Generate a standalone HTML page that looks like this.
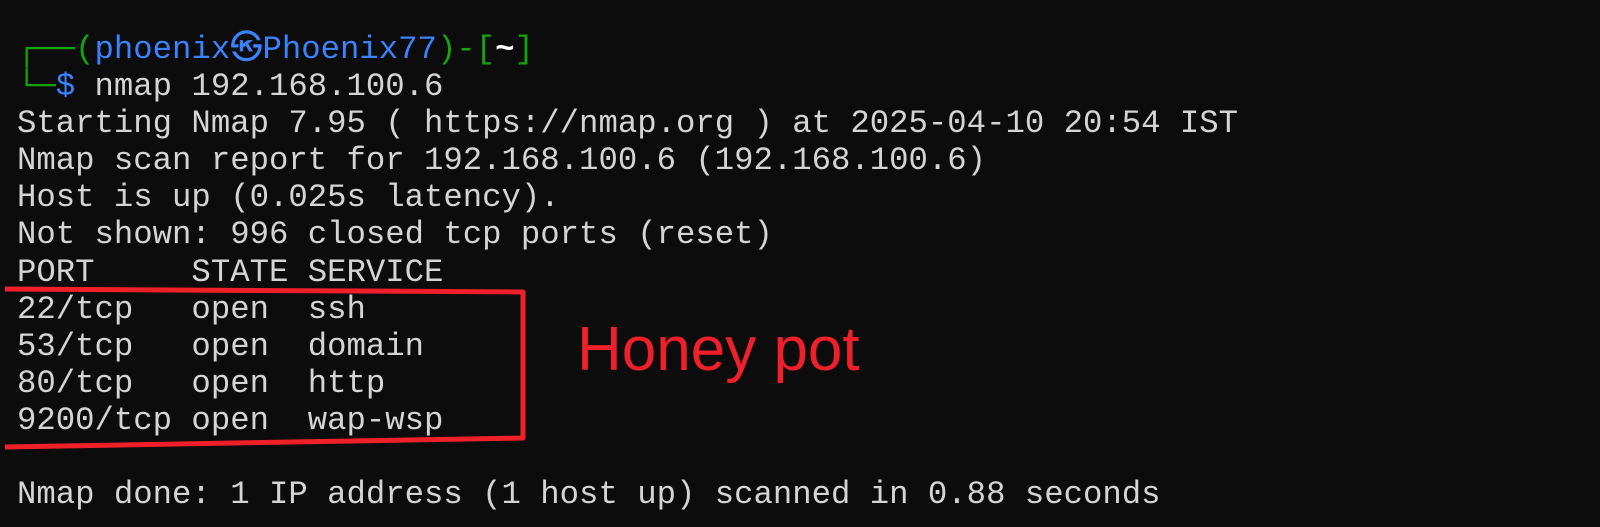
<!DOCTYPE html>
<html><head><meta charset="utf-8"><style>
html,body{margin:0;padding:0;background:#0c0c0c;width:1600px;height:527px;overflow:hidden}
pre{position:absolute;left:17px;top:31px;margin:0;font-family:"Liberation Mono","DejaVu Sans Mono",monospace;font-size:32.3px;line-height:37.1px;color:#d4d4d4}
.g{color:#16a30e}.b{color:#3b82ff}.w{color:#fff;font-weight:bold}
.hp{position:absolute;left:577px;top:314px;font-family:"Liberation Sans",sans-serif;font-size:62px;color:#f0202a}
</style></head><body>
<pre><span class="g">┌──(</span><span class="b">phoenix㉿Phoenix77</span><span class="g">)-[</span><span class="w">~</span><span class="g">]</span>
<span class="g">└─</span><span class="b">$</span> nmap 192.168.100.6
Starting Nmap 7.95 ( https://nmap.org ) at 2025-04-10 20:54 IST
Nmap scan report for 192.168.100.6 (192.168.100.6)
Host is up (0.025s latency).
Not shown: 996 closed tcp ports (reset)
PORT     STATE SERVICE
22/tcp   open  ssh
53/tcp   open  domain
80/tcp   open  http
9200/tcp open  wap-wsp

Nmap done: 1 IP address (1 host up) scanned in 0.88 seconds</pre>
<svg width="1600" height="527" style="position:absolute;left:0;top:0">
<polyline points="5,289 523,292 523,438 5,447" fill="none" stroke="#f0202a" stroke-width="5" stroke-linejoin="round"/>
</svg>
<div class="hp">Honey pot</div>
</body></html>
